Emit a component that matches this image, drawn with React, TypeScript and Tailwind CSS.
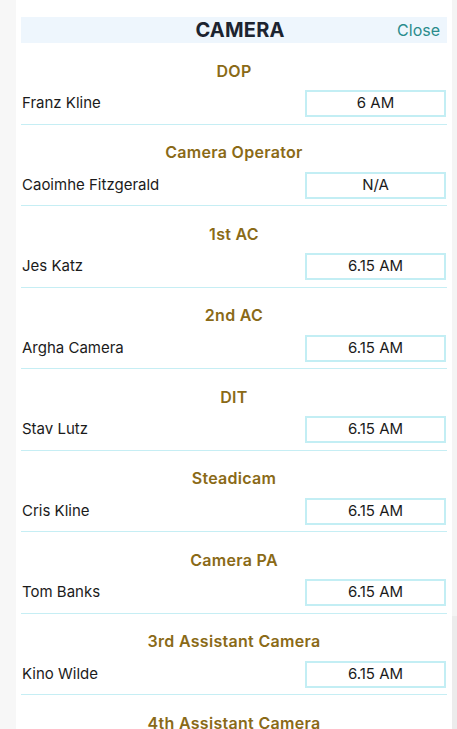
const crew = [
  { role: "DOP", name: "Franz Kline", time: "6 AM" },
  { role: "Camera Operator", name: "Caoimhe Fitzgerald", time: "N/A" },
  { role: "1st AC", name: "Jes Katz", time: "6.15 AM" },
  { role: "2nd AC", name: "Argha Camera", time: "6.15 AM" },
  { role: "DIT", name: "Stav Lutz", time: "6.15 AM" },
  { role: "Steadicam", name: "Cris Kline", time: "6.15 AM" },
  { role: "Camera PA", name: "Tom Banks", time: "6.15 AM" },
  { role: "3rd Assistant Camera", name: "Kino Wilde", time: "6.15 AM" },
  { role: "4th Assistant Camera", name: "Lou Grant", time: "6.15 AM" },
];

export default function App() {
  return (
    <div
      className="flex h-[729px] w-[457px] overflow-hidden bg-[#f7f7f7]"
      style={{ fontFamily: "Inter, 'Noto Sans', sans-serif" }}
    >
      <div className="w-4 shrink-0" />

      <div className="flex-1 bg-white px-[5px] pt-[17px]">
        {/* Header */}
        <div className="flex h-[26px] items-center bg-[#eef6fd]">
          <div className="w-[62px]" />
          <h1 className="flex-1 text-center text-[20px] font-bold leading-none tracking-[0.2px] text-[#1c2430]">
            CAMERA
          </h1>
          <button className="pr-[7px] text-[16px] leading-none text-[#2a8c8c]">Close</button>
        </div>

        {/* Crew list */}
        {crew.map((c) => (
          <div key={c.role} className="border-b border-[#c6eef4] pt-[15.5px] pb-[6.5px]">
            <div className="h-6 text-center text-[16px] font-semibold leading-6 tracking-[0.3px] text-[#8a6a17]">
              {c.role}
            </div>
            <div className="mt-[7.5px] flex items-center justify-between">
              <span className="pl-[1px] text-[15px] text-[#1b1b1b]">{c.name}</span>
              <div className="mr-[1px] flex h-[27px] w-[141px] items-center justify-center border-2 border-[#c3eef4] text-[15px] text-[#1b1b1b]">
                {c.time}
              </div>
            </div>
          </div>
        ))}
      </div>

      <div className="flex w-[5px] shrink-0 flex-col">
        <div className="h-[616px] bg-[#f4f4f4]" />
        <div className="flex-1 bg-[#ececec]" />
      </div>
    </div>
  );
}
